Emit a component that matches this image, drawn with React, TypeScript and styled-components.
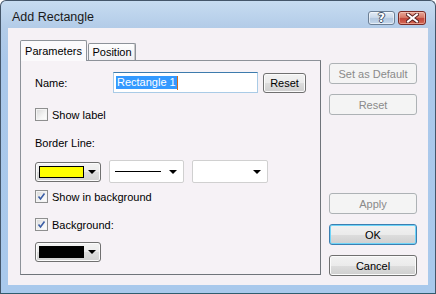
import React from 'react'
import styled, { createGlobalStyle, css } from 'styled-components'

const GlobalStyle = createGlobalStyle`
  html, body {
    margin: 0;
    padding: 0;
    background: #ffffff;
  }
  body {
    font-family: "Liberation Sans", Arial, sans-serif;
    font-size: 11px;
    color: #000;
  }
`

export default function App() {
  return (
    <>
      <GlobalStyle />
      <Window>
        <TitleBar>
          <Title>Add Rectangle</Title>
          <CaptionButtons>
            <CaptionButton>
              <HelpGlyph>?</HelpGlyph>
            </CaptionButton>
            <CaptionButton $close>
              <svg width="13" height="10" viewBox="0 0 13 10">
                <path d="M2 1.5 L11 8.5 M11 1.5 L2 8.5" stroke="#5a2020" strokeWidth="4" strokeLinecap="square" />
                <path d="M2 1.5 L11 8.5 M11 1.5 L2 8.5" stroke="#ffffff" strokeWidth="2" strokeLinecap="square" />
              </svg>
            </CaptionButton>
          </CaptionButtons>
        </TitleBar>

        <Client>
          <TabArea>
            <TabStrip>
              <Tab $active>Parameters</Tab>
              <Tab>Position</Tab>
            </TabStrip>
            <Panel>
              <NameRow>
                <FieldLabel>Name:</FieldLabel>
                <TextBox>
                  <Selected>Rectangle 1</Selected>
                  <Caret />
                </TextBox>
                <Button $small>Reset</Button>
              </NameRow>

              <CheckRow $top={15}>
                <CheckBox checked={false} />
                <span>Show label</span>
              </CheckRow>

              <SectionLabel>Border Line:</SectionLabel>

              <ComboRow>
                <ColorCombo>
                  <Swatch $color="#ffff00" />
                  <Arrow />
                </ColorCombo>
                <FlatCombo>
                  <LineSample />
                  <Arrow />
                </FlatCombo>
                <FlatCombo>
                  <Arrow />
                </FlatCombo>
              </ComboRow>

              <CheckRow $top={7}>
                <CheckBox checked />
                <span>Show in background</span>
              </CheckRow>

              <CheckRow $top={15}>
                <CheckBox checked />
                <span>Background:</span>
              </CheckRow>

              <BottomCombo>
                <ColorCombo>
                  <Swatch $color="#000000" />
                  <Arrow />
                </ColorCombo>
              </BottomCombo>
            </Panel>
          </TabArea>

          <ButtonColumn>
            <ButtonGroup>
              <Button disabled>Set as Default</Button>
              <Button disabled>Reset</Button>
            </ButtonGroup>
            <ButtonGroup $bottom>
              <Button disabled>Apply</Button>
              <Button $default>OK</Button>
              <Button>Cancel</Button>
            </ButtonGroup>
          </ButtonColumn>
        </Client>
      </Window>
    </>
  )
}

const CheckBox = ({ checked }: { checked: boolean }) => (
  <Box>
    {checked && (
      <svg width="9" height="9" viewBox="0 0 9 9">
        <path d="M1.5 4.5 L3.5 7 L7.5 1.5" fill="none" stroke="#3b5ea6" strokeWidth="1.6" />
      </svg>
    )}
  </Box>
)

const Window = styled.div`
  width: 436px;
  height: 294px;
  box-sizing: border-box;
  border: 1px solid #44566a;
  border-bottom-color: #2f5d6e;
  border-radius: 6px 6px 0 0;
  background: linear-gradient(to bottom, #c7dcf1 0px, #b3cce8 26px, #aac8ea 60px, #a9c9ec 100%);
  display: flex;
  flex-direction: column;
  overflow: hidden;
`

const TitleBar = styled.div`
  height: 27px;
  flex: none;
  display: flex;
  align-items: flex-start;
  justify-content: space-between;
  padding: 0 9px 0 11px;
`

const Title = styled.div`
  font-size: 12.5px;
  color: #1a1a1a;
  margin-top: 9px;
  line-height: 14px;
`

const CaptionButtons = styled.div`
  display: flex;
  gap: 3px;
  margin-top: 10px;
`

const CaptionButton = styled.div<{ $close?: boolean }>`
  width: 25px;
  height: 12px;
  border: 1px solid #6b7e94;
  border-radius: 3px;
  display: flex;
  align-items: center;
  justify-content: center;
  background: linear-gradient(to bottom, #e3ecf6 0%, #cbdaeb 45%, #b3c8e0 55%, #c6d8ec 100%);
  box-shadow: inset 0 0 0 1px rgba(255, 255, 255, 0.55);
  ${({ $close }) =>
    $close &&
    css`
      width: 26px;
      border-color: #7a2b25;
      background: linear-gradient(to bottom, #e8a898 0%, #d77a68 45%, #c2463a 55%, #d46a55 100%);
      box-shadow: inset 0 0 0 1px rgba(255, 220, 210, 0.45);
    `}
`

const HelpGlyph = styled.span`
  font-family: "DejaVu Sans", sans-serif;
  font-weight: bold;
  font-size: 12px;
  line-height: 12px;
  color: #ffffff;
  text-shadow: 1px 0 0 #3d4f66, -1px 0 0 #3d4f66, 0 1px 0 #3d4f66, 0 -1px 0 #3d4f66;
`

const Client = styled.div`
  flex: 1;
  margin: 0 7px 8px 7px;
  background: #f5f1f5;
  display: flex;
  padding: 12px 11px 10px 12px;
  box-sizing: border-box;
`

const TabArea = styled.div`
  width: 301px;
  display: flex;
  flex-direction: column;
`

const TabStrip = styled.div`
  height: 20px;
  display: flex;
  align-items: flex-end;
`

const Tab = styled.div<{ $active?: boolean }>`
  box-sizing: border-box;
  height: 17px;
  padding: 0 5px;
  width: 48px;
  border: 1px solid #8d9299;
  border-bottom: none;
  border-radius: 2px 2px 0 0;
  background: linear-gradient(to bottom, #fefefe, #f0eff2);
  display: flex;
  align-items: center;
  justify-content: center;
  font-size: 11px;
  margin-left: 1px;
  box-shadow: inset -1px 0 0 #c9c9c9;
  ${({ $active }) =>
    $active &&
    css`
      width: 67px;
      height: 21px;
      margin-left: 0;
      margin-bottom: -1px;
      position: relative;
      z-index: 1;
      background: #fbfafc;
      box-shadow: none;
      padding-bottom: 1px;
    `}
`

const Panel = styled.div`
  flex: 1;
  box-sizing: border-box;
  border: 1px solid #8d9299;
  border-right-color: #6f747a;
  border-bottom-color: #6f747a;
  background: #f6f2f6;
  padding: 11px 14px 0 14px;
  display: flex;
  flex-direction: column;
  align-items: flex-start;
`

const NameRow = styled.div`
  display: flex;
  align-items: center;
  height: 21px;
`

const FieldLabel = styled.span`
  width: 78px;
`

const TextBox = styled.div`
  box-sizing: border-box;
  width: 145px;
  height: 21px;
  border: 1px solid #a9cbe6;
  border-top-color: #3d7bad;
  background: #ffffff;
  display: flex;
  align-items: center;
  padding-left: 2px;
`

const Selected = styled.span`
  background: #3399ff;
  color: #ffffff;
  line-height: 13px;
  padding: 0 1px;
`

const Caret = styled.span`
  width: 1px;
  height: 14px;
  background: #d2691e;
`

const CheckRow = styled.div<{ $top: number }>`
  display: flex;
  align-items: center;
  gap: 4px;
  height: 13px;
  margin-top: ${({ $top }) => $top}px;
`

const Box = styled.span`
  box-sizing: border-box;
  width: 13px;
  height: 13px;
  border: 1px solid #8e8f8f;
  background: linear-gradient(135deg, #d7d7d7 0%, #f4f4f4 60%, #ffffff 100%);
  box-shadow: inset 0 0 0 1px #f4f4f4;
  display: flex;
  align-items: center;
  justify-content: center;
`

const SectionLabel = styled.div`
  margin-top: 16px;
  line-height: 13px;
`

const ComboRow = styled.div`
  display: flex;
  align-items: center;
  gap: 8px;
  height: 23px;
  margin-top: 10px;
`

const ColorCombo = styled.div`
  box-sizing: border-box;
  width: 66px;
  height: 20px;
  border: 1px solid #707070;
  border-radius: 3px;
  background: linear-gradient(to bottom, #f3f3f3 0%, #ebebeb 50%, #dddddd 51%, #d2d2d2 100%);
  box-shadow: inset 0 0 0 1px #fbfbfb;
  display: flex;
  align-items: center;
  padding: 0 4px 0 3px;
  gap: 4px;
`

const Swatch = styled.span<{ $color: string }>`
  width: 45px;
  height: 10px;
  border: 1px solid #000000;
  background: ${({ $color }) => $color};
`

const Arrow = styled.span`
  width: 0;
  height: 0;
  border-left: 4px solid transparent;
  border-right: 4px solid transparent;
  border-top: 4px solid #000000;
  margin-left: auto;
`

const FlatCombo = styled.div`
  box-sizing: border-box;
  width: 75px;
  height: 23px;
  border: 1px solid #d0d0d0;
  border-radius: 2px;
  background: #ffffff;
  display: flex;
  align-items: center;
  padding: 0 6px 0 5px;

  &:last-child {
    width: 76px;
  }
`

const LineSample = styled.span`
  width: 46px;
  height: 1px;
  background: #000000;
`

const BottomCombo = styled.div`
  margin-top: 11px;
`

const ButtonColumn = styled.div`
  width: 88px;
  margin-left: 8px;
  display: flex;
  flex-direction: column;
  padding-top: 23px;
  margin-bottom: -1px;
`

const ButtonGroup = styled.div<{ $bottom?: boolean }>`
  display: flex;
  flex-direction: column;
  gap: 10px;
  ${({ $bottom }) =>
    $bottom &&
    css`
      margin-top: auto;
    `}
`

const Button = styled.button<{ $default?: boolean; $small?: boolean }>`
  box-sizing: border-box;
  width: 88px;
  height: 21px;
  padding: 0;
  font-family: "Liberation Sans", Arial, sans-serif;
  font-size: 11px;
  color: #000000;
  border: 1px solid #707070;
  border-radius: 3px;
  background: linear-gradient(to bottom, #f2f2f2 0%, #ebebeb 50%, #dddddd 51%, #cfcfcf 100%);
  box-shadow: inset 0 0 0 1px #fbfbfb;

  &:disabled {
    color: #8a8a8a;
    border-color: #adb2b5;
    background: #f4f4f4;
    box-shadow: none;
  }

  ${({ $default }) =>
    $default &&
    css`
      border-color: #3c7fb1;
      box-shadow: inset 0 0 0 1px #6fd4f8;
    `}

  ${({ $small }) =>
    $small &&
    css`
      width: 43px;
      height: 20px;
      margin-left: 5px;
    `}
`
